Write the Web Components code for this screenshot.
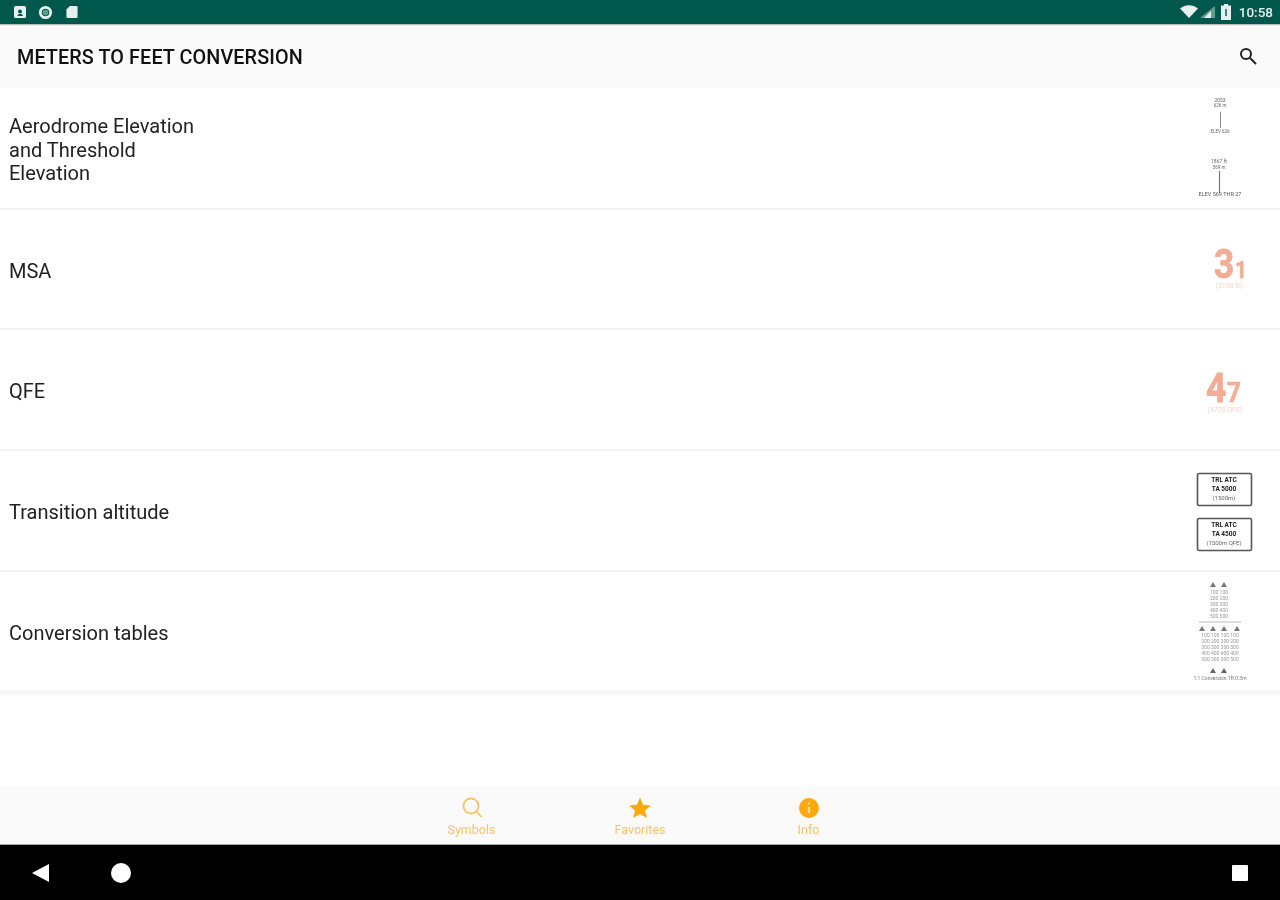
<!DOCTYPE html>
<html>
<head>
<meta charset="utf-8">
<title>Meters to feet conversion</title>
<style>
    html, body { margin: 0; padding: 0; background: #fff; }
    /* the reference is an upscaled capture, everything in it is slightly soft */
    body { width: 1280px; height: 900px; overflow: hidden; font-family: Roboto, "Liberation Sans", sans-serif; display: flex; flex-direction: column; filter: blur(.55px); }
    symbol-list { flex: 1; }
</style>
</head>
<body>
<status-bar></status-bar>
<app-bar>METERS TO FEET CONVERSION</app-bar>
<symbol-list>
    <symbol-row h="122">
        <span>Aerodrome Elevation<br>and Threshold<br>Elevation</span>
        <svg slot="thumb" class="soft" width="60" height="110" viewBox="0 0 60 110" font-family="Roboto" text-anchor="middle" fill="#666">
            <text x="26" y="9" font-size="5">2053</text>
            <text x="26" y="14" font-size="4.500">626 m</text>
            <path d="M26.500 19v16" stroke="#888" stroke-width="1"/>
            <text x="26" y="40" font-size="4.500">ELEV 626</text>
            <text x="25" y="70" font-size="5">1867 ft</text>
            <text x="25" y="76" font-size="4.500">569 m</text>
            <path d="M25.500 78v22" stroke="#777" stroke-width="1.200"/>
            <text x="26" y="103" font-size="5.500" fill="#555">ELEV 569 THR 27</text>
        </svg>
    </symbol-row>
    <symbol-row h="120">
        <span>MSA</span>
        <svg slot="thumb" width="60" height="60" viewBox="0 0 60 60" font-family="Roboto" fill="#f2ad94" stroke="#f2ad94">
            <text transform="translate(20 39) scale(.86 1)" font-size="41" font-weight="700" stroke-width=".8">3</text>
            <text transform="translate(41 39) scale(.9 1)" font-size="23" font-weight="700" stroke-width=".6">1</text>
            <text x="35" y="49" font-size="7" text-anchor="middle" fill="#f8d5c8" stroke="none">(3100 ft)</text>
        </svg>
    </symbol-row>
    <symbol-row h="121">
        <span>QFE</span>
        <svg slot="thumb" width="60" height="60" viewBox="0 0 60 60" font-family="Roboto" fill="#f2ad94" stroke="#f2ad94">
            <text transform="translate(12 42) scale(.86 1)" font-size="41" font-weight="700" stroke-width=".8">4</text>
            <text transform="translate(33 42) scale(.9 1)" font-size="27" font-weight="700" stroke-width=".6">7</text>
            <text x="31" y="52" font-size="7" text-anchor="middle" fill="#f8d5c8" stroke="none">(4700 QFE)</text>
        </svg>
    </symbol-row>
    <symbol-row h="121">
        <span>Transition altitude</span>
        <svg slot="thumb" class="soft" width="60" height="84" viewBox="0 0 60 84" font-family="Roboto" text-anchor="middle" fill="#222">
            <rect x="3.500" y="4.500" width="54" height="32" rx="1.500" fill="#fff" stroke="#555" stroke-width="1.600"/>
            <text x="30" y="12.500" font-size="6.500" font-weight="700">TRL ATC</text>
            <text x="30" y="22" font-size="6.500" font-weight="700">TA 5000</text>
            <text x="30" y="31" font-size="6" fill="#666">(1500m)</text>
            <rect x="3.500" y="49.500" width="54" height="32" rx="1.500" fill="#fff" stroke="#555" stroke-width="1.600"/>
            <text x="30" y="57.500" font-size="6.500" font-weight="700">TRL ATC</text>
            <text x="30" y="67" font-size="6.500" font-weight="700">TA 4500</text>
            <text x="30" y="76" font-size="6" fill="#666">(1500m QFE)</text>
        </svg>
    </symbol-row>
    <symbol-row h="123" thick>
        <span>Conversion tables</span>
        <svg slot="thumb" class="soft" width="60" height="104" viewBox="0 0 60 104" font-family="Roboto" text-anchor="middle" fill="#999" font-size="5">
            <path d="M19 3l-3 5h6zM30 3l-3 5h6z" fill="#777"/>
            <text x="25" y="15">100 100</text>
            <text x="25" y="21">200 200</text>
            <text x="25" y="27">300 300</text>
            <text x="25" y="33">400 400</text>
            <text x="25" y="39">500 500</text>
            <path d="M5 43h42" stroke="#bbb"/>
            <path d="M8 47l-3 5h6zM19 47l-3 5h6zM30 47l-3 5h6zM43 47l-3 5h6z" fill="#777"/>
            <text x="26" y="58">100 100 100 100</text>
            <text x="26" y="64">200 200 200 200</text>
            <text x="26" y="70">300 300 300 300</text>
            <text x="26" y="76">400 400 400 400</text>
            <text x="26" y="82">500 500 500 500</text>
            <path d="M19 89l-3 5h6zM30 89l-3 5h6z" fill="#666"/>
            <text x="26" y="101" fill="#777">1:1 Conversion 1ft:0.3m</text>
        </svg>
    </symbol-row>
</symbol-list>
<bottom-tabs>
    <tab-item label="Symbols">
        <svg width="24" height="24" viewBox="0 0 24 24" fill="none" stroke="#fbc364" stroke-width="1.800"><circle cx="11" cy="10" r="7.500"/><path d="M16.500 15.500l5 5.500"/></svg>
    </tab-item>
    <tab-item label="Favorites">
        <svg width="24" height="24" viewBox="0 0 24 24" fill="#ffa90a"><path d="M12 1.500l3.100 7.200 7.800.7-5.900 5.100 1.800 7.600-6.800-4-6.800 4 1.800-7.600-5.900-5.100 7.800-.7z"/></svg>
    </tab-item>
    <tab-item label="Info">
        <svg width="24" height="24" viewBox="0 0 24 24"><circle cx="12" cy="12" r="10" fill="#ffa90a"/><path d="M12 6.500v2M12 11v6" stroke="#ffe0a0" stroke-width="2.200"/></svg>
    </tab-item>
</bottom-tabs>
<nav-bar></nav-bar>

<script>
class StatusBar extends HTMLElement {
    constructor() {
        super();
        this.attachShadow({ mode: 'open' }).innerHTML = `
            <style>
                :host { display: flex; height: 24px; background: #00574b; box-shadow: 0 1px 1px rgba(0,0,0,.25); align-items: center; padding: 0 7px 0 13px; color: #e6f0ee; position: relative; z-index: 1; }
                .left { display: flex; align-items: center; }
                .right { margin-left: auto; display: flex; align-items: center; }
                .clock { font: 500 13.500px Roboto, sans-serif; margin-left: 8px; }
                svg { display: block; }
            </style>
            <div class="left">
                <svg width="14" height="14" viewBox="0 0 14 14" style="margin-right:11px"><rect x="1" y="1" width="12" height="12" rx="1.500" fill="#e6f0ee"/><circle cx="7" cy="6.500" r="2" fill="#00574b"/><path d="M4 11l2-2h3l1 2z" fill="#00574b"/></svg>
                <svg width="15" height="15" viewBox="0 0 16 16" style="margin-right:13px"><circle cx="8" cy="8" r="5.500" fill="none" stroke="#e6f0ee" stroke-width="3"/><circle cx="8" cy="8" r="3" fill="#5f9d92"/></svg>
                <svg width="12" height="16" viewBox="0 0 14 16"><path d="M4.500 1H12a1.500 1.500 0 0 1 1.500 1.500v11a1.500 1.500 0 0 1-1.500 1.500H2a1.500 1.500 0 0 1-1.500-1.500V5z" fill="#e6f0ee"/></svg>
            </div>
            <div class="right">
                <svg width="35" height="14" viewBox="0 0 35 14"><path d="M0 3.500C5-1 13-1 18 3.500L9 13z" fill="#e6f0ee"/><path d="M35 1v12H20z" fill="#e6f0ee" opacity=".45"/><path d="M31 6v7h-7z" fill="#e6f0ee"/></svg>
                <svg width="10" height="16" viewBox="0 0 10 16" style="margin-left:6px"><path d="M3 0h4v1.500h3V16H0V1.500h3z" fill="#e6f0ee"/><rect x="4" y="5" width="2" height="7" fill="#00574b" opacity=".7"/></svg>
                <span class="clock">10:58</span>
            </div>`;
    }
}

class AppBar extends HTMLElement {
    constructor() {
        super();
        this.attachShadow({ mode: 'open' }).innerHTML = `
            <style>
                :host { display: flex; height: 64px; background: #fafafa; align-items: center; justify-content: space-between; padding: 0 22px 0 17px; }
                h1 { margin: 3px 0 0; font: 500 19.800px Roboto, sans-serif; color: #111; letter-spacing: .1px; }
                svg { display: block; }
            </style>
            <h1><slot></slot></h1>
            <svg width="20" height="20" viewBox="0 0 20 20" fill="none" stroke="#222" stroke-width="2"><circle cx="8" cy="8" r="5"/><path d="M12 12l6 6"/></svg>`;
    }
}

class SymbolList extends HTMLElement {
    constructor() {
        super();
        this.attachShadow({ mode: 'open' }).innerHTML = `
            <style>:host { display: flex; flex-direction: column; background: #fff; }</style>
            <slot></slot>`;
    }
}

class SymbolRow extends HTMLElement {
    constructor() {
        super();
        const root = this.attachShadow({ mode: 'open' });
        root.innerHTML = `
            <style>
                :host { display: flex; box-sizing: border-box; align-items: center; justify-content: space-between; padding: 0 26px 0 9px; border-bottom: 2px solid #f3f3f3; color: #222; font: 400 20px/23.500px Roboto, sans-serif; }
                :host([thick]) { border-bottom: 5px solid #f8f8f8; }
                .label { padding-top: 5px; }
                ::slotted(svg) { display: block; }
                ::slotted(svg.soft) { filter: blur(.5px); }
            </style>
            <div class="label"><slot></slot></div>
            <slot name="thumb"></slot>`;
        this.style.height = this.getAttribute('h') + 'px';
    }
}

class TabItem extends HTMLElement {
    constructor() {
        super();
        this.attachShadow({ mode: 'open' }).innerHTML = `
            <style>
                :host { display: flex; flex-direction: column; align-items: center; width: 168.500px; color: #fbc364; font: 400 12.500px Roboto, sans-serif; }
                .ic { height: 24px; margin-bottom: 2px; }
                ::slotted(svg) { display: block; }
            </style>
            <div class="ic"><slot></slot></div>
            <span>${this.getAttribute('label')}</span>`;
    }
}

class BottomTabs extends HTMLElement {
    constructor() {
        super();
        this.attachShadow({ mode: 'open' }).innerHTML = `
            <style>:host { display: flex; justify-content: center; box-sizing: border-box; height: 58px; padding-top: 10px; background: #fafafa; }</style>
            <slot></slot>`;
    }
}

class NavBar extends HTMLElement {
    constructor() {
        super();
        this.attachShadow({ mode: 'open' }).innerHTML = `
            <style>
                :host { display: flex; box-sizing: border-box; height: 56px; background: #000; border-top: 1px solid #aaa; align-items: center; padding: 0 31px; }
                svg { display: block; }
                .home { margin-left: 60px; }
                .recent { margin-left: auto; }
            </style>
            <svg width="20" height="20" viewBox="0 0 20 20"><path d="M1 10L18 1v18z" fill="#fff"/></svg>
            <svg class="home" width="20" height="20" viewBox="0 0 20 20"><circle cx="10" cy="10" r="10" fill="#fff"/></svg>
            <svg class="recent" width="18" height="18" viewBox="0 0 18 18"><rect x="1" y="1" width="16" height="16" rx="1" fill="#fff"/></svg>`;
    }
}

customElements.define('status-bar', StatusBar);
customElements.define('app-bar', AppBar);
customElements.define('symbol-list', SymbolList);
customElements.define('symbol-row', SymbolRow);
customElements.define('tab-item', TabItem);
customElements.define('bottom-tabs', BottomTabs);
customElements.define('nav-bar', NavBar);
</script>
</body>
</html>
